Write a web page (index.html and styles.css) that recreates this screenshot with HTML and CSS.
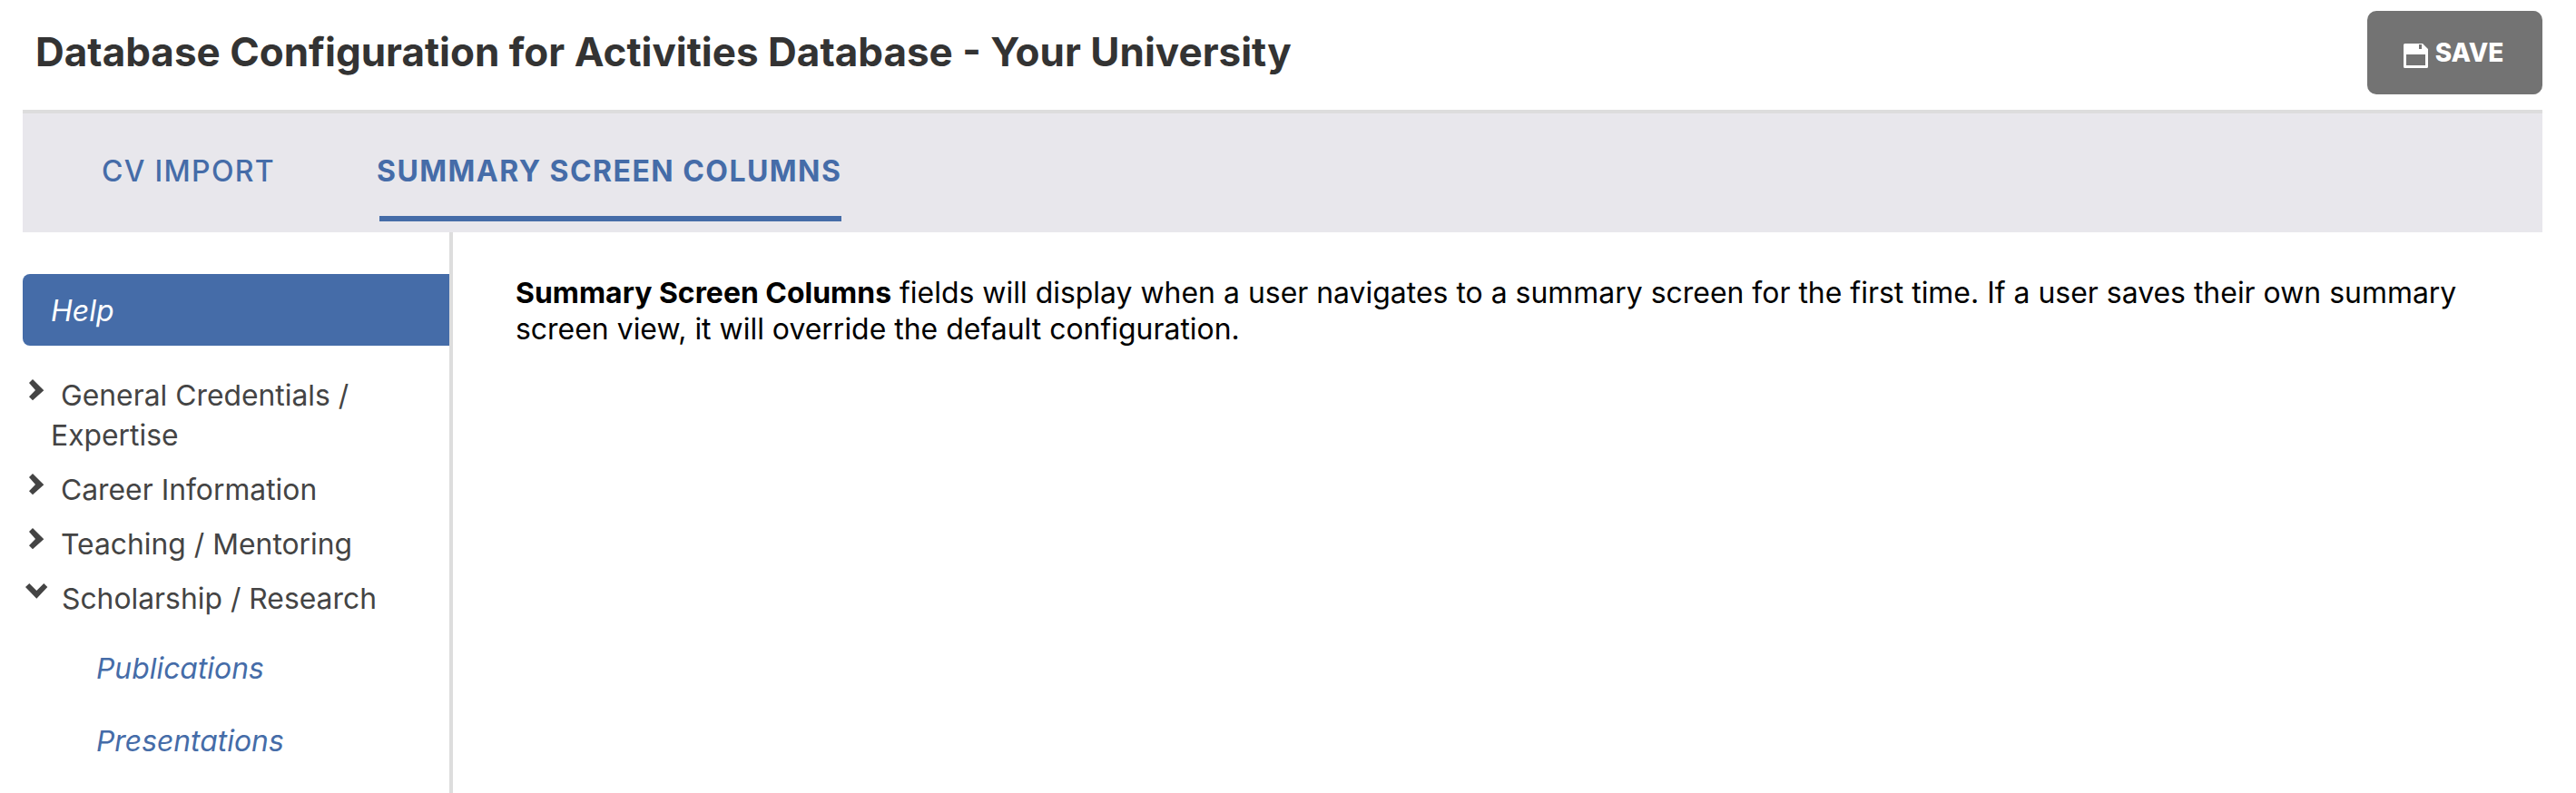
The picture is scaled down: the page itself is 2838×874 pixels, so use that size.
FILE: index.html
```html
<!DOCTYPE html>
<html lang="en">
<head>
    <meta charset="UTF-8">
    <title>Database Configuration</title>
    <link rel="stylesheet" href="styles.css">
</head>
<body>
    <header class="page-header">
        <h1>Database Configuration for Activities Database - Your University</h1>
        <button class="save-button">
            <svg class="save-icon" viewBox="0 0 27 27"><path fill-rule="evenodd" d="M1.5 0H21l6 6v19.5a1.5 1.5 0 0 1-1.5 1.5H1.500a1.500 1.500 0 0 1-1.500-1.500V1.500A1.500 1.500 0 0 1 1.500 0zM17 1v5h3V1zM3 12v12h21V12z"/></svg>
            SAVE
        </button>
    </header>

    <nav class="tabs">
        <a class="tab">CV IMPORT</a>
        <a class="tab active">SUMMARY SCREEN COLUMNS</a>
    </nav>

    <div class="main">
        <aside class="sidebar">
            <div class="help-item">Help</div>
            <ul class="tree">
                <li>
                    <svg class="chevron" viewBox="0 0 17 24"><path d="M0 4L4 0 16.300 12.300 4 23.300 0 19.300 7 12z"/></svg>
                    General Credentials / Expertise
                </li>
                <li>
                    <svg class="chevron" viewBox="0 0 17 24"><path d="M0 4L4 0 16.300 12.300 4 23.300 0 19.300 7 12z"/></svg>
                    Career Information
                </li>
                <li>
                    <svg class="chevron" viewBox="0 0 17 24"><path d="M0 4L4 0 16.300 12.300 4 23.300 0 19.300 7 12z"/></svg>
                    Teaching / Mentoring
                </li>
                <li>
                    <svg class="chevron open" viewBox="0 0 25 17"><path d="M0 4L4.300 0 12.300 8 20.300 0 24.300 4 12.300 16.700z"/></svg>
                    Scholarship / Research
                    <ul class="subtree">
                        <li>Publications</li>
                        <li>Presentations</li>
                    </ul>
                </li>
            </ul>
        </aside>
        <section class="content">
            <p><strong>Summary Screen Columns</strong> fields will display when a user navigates to a summary screen for the first time. If a user saves their own summary screen view, it will override the default configuration.</p>
        </section>
    </div>
</body>
</html>
```

FILE: styles.css
```css
html, body {
    height: 100%;
}

body {
    margin: 0;
    padding: 0 37px 0 25px;
    box-sizing: border-box;
    display: flex;
    flex-direction: column;
    overflow: hidden;
    background: #fff;
    font-family: 'Inter', sans-serif;
    color: #444;
}

.page-header {
    height: 121px;
    display: flex;
    justify-content: space-between;
    align-items: flex-start;
    flex-shrink: 0;
}

.page-header h1 {
    margin: 0;
    padding: 32px 0 0 14px;
    font-size: 44px;
    line-height: 50px;
    font-weight: 700;
    color: #333;
}

.save-button {
    margin-top: 12px;
    width: 193px;
    height: 92px;
    padding: 0 3px 0 0;
    display: flex;
    justify-content: center;
    align-items: center;
    gap: 8px;
    border: none;
    border-radius: 10px;
    background: #737373;
    color: #fff;
    font-family: 'Inter', sans-serif;
    font-size: 28px;
    font-weight: 800;
}

.save-icon {
    width: 27px;
    height: 27px;
    margin-top: 6px;
    fill: #fff;
}

.tabs {
    height: 131px;
    flex-shrink: 0;
    display: flex;
    gap: 112px;
    padding-left: 87px;
    border-top: 4px solid #ddd;
    background: #e8e7ec;
}

.tab {
    height: 119px;
    box-sizing: border-box;
    padding-top: 44px;
    font-size: 32px;
    font-weight: 500;
    line-height: 40px;
    letter-spacing: 1.3px;
    color: #456ca8;
}

.tab.active {
    position: relative;
    font-weight: 700;
    letter-spacing: 1.45px;
}

.tab.active::after {
    content: "";
    position: absolute;
    left: 3px;
    right: 0;
    bottom: 0;
    height: 6px;
    background: #456ca8;
}

.main {
    flex: 1;
    display: flex;
}

.sidebar {
    width: 474px;
    flex-shrink: 0;
    box-sizing: border-box;
    padding-top: 46px;
    border-right: 4px solid #ddd;
}

.help-item {
    height: 79px;
    padding-left: 31px;
    border-radius: 8px 0 0 8px;
    background: #456ca8;
    color: #fff;
    font-style: italic;
    font-size: 32px;
    line-height: 81px;
}

.tree, .subtree {
    list-style: none;
    margin: 0;
    padding: 0;
}

.tree {
    padding: 33px 0 0 31px;
    font-size: 31.85px;
    line-height: 44px;
}

.tree > li {
    margin-bottom: 16px;
}

.chevron {
    width: 17px;
    height: 24px;
    margin-left: -24px;
    margin-right: 9px;
    fill: #444;
    vertical-align: 5px;
}

.chevron.open {
    width: 25px;
    height: 17px;
    margin-left: -28px;
    margin-right: 6px;
    vertical-align: 11px;
}

.subtree {
    padding: 33px 0 0 50px;
    font-style: italic;
    color: #456ca8;
}

.subtree li {
    margin-bottom: 36px;
}

.content {
    flex: 1;
    padding: 47px 70px 0 69px;
}

.content p {
    margin: 0;
    font-size: 31.95px;
    line-height: 40px;
    color: #000;
}
```
